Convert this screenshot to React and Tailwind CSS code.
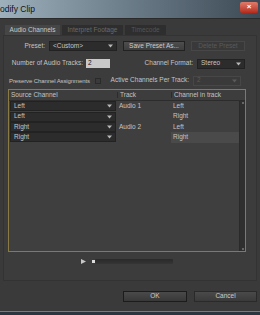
import React from 'react';

const font = { fontFamily: '"Liberation Sans", Arial, sans-serif' };

function Arrow({ dim = false }) {
  return (
    <svg width="5" height="4" viewBox="0 0 5 4" className="shrink-0">
      <path d="M0 0.5 L5 0.5 L2.5 3.5 Z" fill={dim ? '#5a5a5a' : '#b8b8b8'} />
    </svg>
  );
}

function Select({ label, className = '', dim = false }) {
  return (
    <div
      className={`flex h-[10px] shrink-0 items-center justify-between border pl-[3px] pr-[3px] ${
        dim ? 'border-[#474747] bg-[#3a3a3a]' : 'border-[#222] bg-[#2c2c2c]'
      } ${className}`}
    >
      <span className={dim ? 'text-[#5a5a5a]' : 'text-[#c4c4c4]'}>{label}</span>
      <Arrow dim={dim} />
    </div>
  );
}

const rows = [
  { src: 'Left', track: 'Audio  1', ch: 'Left' },
  { src: 'Left', track: '', ch: 'Right' },
  { src: 'Right', track: 'Audio  2', ch: 'Left' },
  { src: 'Right', track: '', ch: 'Right', hi: true },
];

export default function App() {
  return (
    <div
      className="flex h-[315px] w-[260px] flex-col overflow-hidden whitespace-nowrap bg-[#3a3a3a] text-[6.5px] leading-none text-[#c4c4c4]"
      style={font}
    >
      {/* title bar */}
      <div className="flex h-[18px] shrink-0 items-center justify-between bg-gradient-to-r from-[#9fb0bd] via-[#6b7c89] to-[#3d4a55] pr-[2px]">
        <span className="text-[8.5px] text-[#111]">odify Clip</span>
        <div className="mb-[4px] flex h-[11px] w-[18px] items-center justify-center rounded-[2px] bg-gradient-to-b from-[#e07a6a] to-[#b3281a]">
          <span className="text-[8px] font-bold text-white">×</span>
        </div>
      </div>
      <div className="h-px shrink-0 bg-[#2a2a2a]" />

      {/* tabs */}
      <div className="mt-[6px] flex h-[10px] shrink-0 gap-[2px] pl-[5px]">
        <div className="flex w-[55px] items-center justify-center bg-[#464646] text-[#c8c8c8]">Audio Channels</div>
        <div className="flex w-[61px] items-center justify-center bg-[#2e2e2e] text-[#6a6a6a]">Interpret Footage</div>
        <div className="flex w-[41px] items-center justify-center bg-[#2e2e2e] text-[#555]">Timecode</div>
      </div>

      {/* panel */}
      <div className="mx-[3px] flex h-[246px] shrink-0 flex-col border border-[#333] bg-[#3c3c3c]">
        {/* preset row */}
        <div className="mt-[5px] flex h-[10px] items-center">
          <span className="w-[41px] text-right">Preset:</span>
          <Select label="<Custom>" className="ml-[4px] w-[68px]" />
          <div className="ml-[6px] flex h-[10px] w-[62px] items-center justify-center border border-[#222] bg-gradient-to-b from-[#4e4e4e] to-[#3e3e3e] text-[#ccc]">
            Save Preset As...
          </div>
          <div className="ml-[6px] flex h-[10px] w-[54px] items-center justify-center border border-[#474747] bg-[#393939] text-[#5a5a5a]">
            Delete Preset
          </div>
        </div>

        {/* tracks row */}
        <div className="mt-[8px] flex h-[9px] items-center">
          <span className="w-[79px] text-right">Number of Audio Tracks:</span>
          <div className="ml-[3px] flex h-[9px] w-[24px] items-center bg-[#c9c9c9] pl-[2px] text-[#111]">2</div>
          <span className="w-[83px] text-right">Channel Format:</span>
          <Select label="Stereo" className="ml-[4px] w-[48px]" />
        </div>

        {/* preserve row */}
        <div className="mt-[8px] flex h-[9px] items-center">
          <span className="w-[91px] shrink-0 pl-[5px] text-[6px] tracking-[-0.1px]">Preserve Channel Assignments</span>
          <div className="h-[6px] w-[6px] shrink-0 border border-[#2a2a2a] bg-[#3a3a3a]" />
          <span className="w-[88px] text-right">Active Channels Per Track:</span>
          <Select label="2" dim className="ml-[4px] w-[48px]" />
        </div>

        {/* table */}
        <div className="ml-[4px] mr-[10px] mt-[4px] flex h-[163px] flex-col border border-[#8a7a45] bg-[#3f3f3f]">
          <div className="flex h-[11px] shrink-0 items-center border-b border-[#2c2c2c] bg-[#3d3d3d]">
            <span className="w-[108px] pl-[2px]">Source Channel</span>
            <span className="w-[54px] border-l border-[#2c2c2c] pl-[2px]">Track</span>
            <span className="border-l border-[#2c2c2c] pl-[2px]">Channel in track</span>
          </div>
          <div className="flex flex-1">
            <div className="flex flex-1 flex-col">
              {rows.map((r, i) => (
                <div key={i} className={`flex h-[10.4px] items-center ${r.hi ? 'bg-[#4a4a4a]' : ''}`}>
                  <div className="flex h-full w-[108px] items-center bg-[#3f3f3f] px-[1px]">
                    <Select label={r.src} className="w-full" />
                  </div>
                  <span className={`flex h-full w-[54px] items-center pl-[2px] ${r.hi ? 'bg-[#3f3f3f]' : ''}`}>
                    {r.track}
                  </span>
                  <span className="pl-[2px]">{r.ch}</span>
                </div>
              ))}
            </div>
            <div className="flex w-[6px] flex-col items-center justify-between border-l border-[#2a2a2a] bg-[#2f2f2f] py-[1px]">
              <div className="h-[2px] w-[2px] bg-[#666]" />
              <div className="h-[2px] w-[2px] bg-[#666]" />
            </div>
          </div>
        </div>

        {/* player */}
        <div className="mt-[7px] flex items-center">
          <svg width="5" height="5" viewBox="0 0 5 5" className="ml-[77px]">
            <path d="M0 0 L5 2.5 L0 5 Z" fill="#c8c8c8" />
          </svg>
          <div className="ml-[6px] h-[3px] w-[3px] bg-[#ddd]" />
          <div className="h-[5px] w-[78px] rounded-[1px] bg-gradient-to-b from-[#2a2a2a] to-[#353535]" />
        </div>
      </div>

      {/* buttons */}
      <div className="mt-[10px] flex shrink-0 gap-[7px] pl-[123px]">
        <div className="flex h-[11px] w-[64px] items-center justify-center border border-[#1c1c1c] bg-gradient-to-b from-[#4a4a4a] to-[#383838] text-[#ccc]">
          OK
        </div>
        <div className="flex h-[11px] w-[63px] items-center justify-center border border-[#2a2a2a] bg-gradient-to-b from-[#4a4a4a] to-[#3a3a3a] text-[#ccc]">
          Cancel
        </div>
      </div>

      <div className="mt-auto h-[4px] shrink-0 border-t border-[#6e7f8c] bg-[#2b3640]" />
    </div>
  );
}
